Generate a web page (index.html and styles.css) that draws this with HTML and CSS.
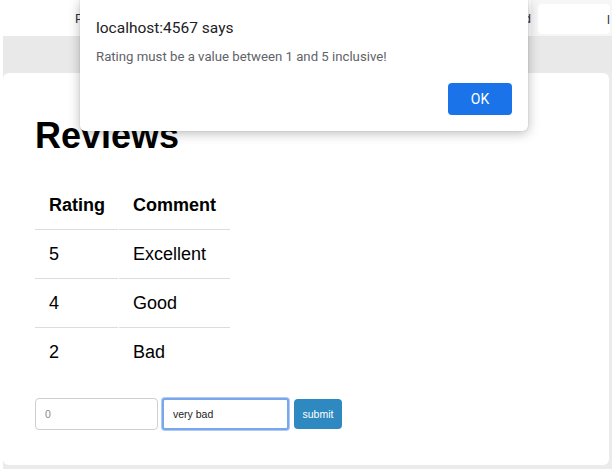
FILE: index.html
```html
<!DOCTYPE html>
<html>
<head>
<meta charset="utf-8">
<link rel="stylesheet" href="styles.css">
</head>
<body>
<div class="page">
  <nav class="topbar">
    <div class="tab tab-first"><span class="tab-label">Products</span></div>
    <div class="tab tab-mid"><span class="tab-label">Add</span></div>
    <div class="tab tab-last"><span class="tab-label">l</span></div>
  </nav>
  <div class="band"></div>
  <main class="card">
    <h1 class="title">Reviews</h1>
    <table class="reviews">
      <thead>
        <tr><th>Rating</th><th>Comment</th></tr>
      </thead>
      <tbody>
        <tr><td>5</td><td>Excellent</td></tr>
        <tr><td>4</td><td>Good</td></tr>
        <tr><td>2</td><td>Bad</td></tr>
      </tbody>
    </table>
    <form class="review-form">
      <input class="field field-rating" type="text" placeholder="0">
      <input class="field field-comment" type="text" value="very bad">
      <button class="submit" type="button">submit</button>
    </form>
  </main>
</div>
<div class="dialog">
  <div class="dialog-title">localhost:4567 says</div>
  <div class="dialog-msg">Rating must be a value between 1 and 5 inclusive!</div>
  <div class="dialog-actions"><button class="ok" type="button">OK</button></div>
</div>
</body>
</html>
```
FILE: styles.css
```css
html, body {
  margin: 0;
  padding: 0;
  background: #ffffff;
  font-family: "Liberation Sans", Arial, sans-serif;
  color: #000;
}
.page {
  margin-left: 3px;
  background: #ebebeb;
  height: 469px;
  display: flex;
  flex-direction: column;
}
.topbar {
  height: 36px;
  background: #f6f6f6;
  display: flex;
  align-items: stretch;
}
.tab {
  background: #fff;
  display: flex;
  align-items: center;
  font-size: 13px;
  color: #333;
}
.tab-first {
  width: 200px;
  padding-left: 72px;
  box-sizing: border-box;
}
.tab-mid {
  margin-left: 50px;
  width: 278px;
  justify-content: flex-end;
  box-sizing: border-box;
}
.tab-last {
  margin: 4px 0 2px 7px;
  width: 72px;
  border-radius: 4px;
  padding-left: 69px;
  box-sizing: border-box;
  white-space: nowrap;
}
.band {
  height: 37px;
  background: #e9e9e9;
}
.card {
  background: #fff;
  width: 606px;
  height: 392px;
  box-sizing: border-box;
  border-radius: 6px;
  padding: 1px 32px 0 32px;
}
.title {
  font-size: 36px;
  font-weight: bold;
  margin: 41px 0 24px 0;
  line-height: 42px;
}
.reviews {
  border-collapse: separate;
  border-spacing: 1px 0;
  margin-left: -1px;
  font-size: 18px;
}
.reviews th, .reviews td {
  text-align: left;
  padding: 0 14px;
  height: 48px;
  vertical-align: middle;
}
.reviews th:first-child, .reviews td:first-child {
  padding-right: 13px;
}
.reviews th {
  font-weight: bold;
}
.reviews thead th, .reviews tbody tr:not(:last-child) td {
  border-bottom: 1px solid #dcdcdc;
}
.review-form {
  display: flex;
  align-items: center;
  gap: 4px;
  margin-top: 22px;
}
.field {
  height: 32px;
  box-sizing: border-box;
  border: 1px solid #cfcfcf;
  border-radius: 4px;
  font-family: "Liberation Sans", Arial, sans-serif;
  font-size: 10.5px;
  padding: 0 9px;
  color: #222;
  background: #fff;
  outline: none;
}
.field::placeholder {
  color: #888;
}
.field-rating {
  width: 123px;
}
.field-comment {
  width: 127px;
  border: 2px solid #7aa7ec;
  border-radius: 3px;
  box-shadow: 0 0 0 1px #aecbf5;
  padding: 0 9px;
}
.submit {
  width: 48px;
  height: 30px;
  border: none;
  border-radius: 4px;
  background: #2d89bf;
  color: #fff;
  font-family: "Liberation Sans", Arial, sans-serif;
  font-size: 10.5px;
  padding: 0;
  margin-left: 1px;
}
.dialog {
  position: absolute;
  left: 80px;
  top: 0;
  width: 448px;
  height: 131px;
  box-sizing: border-box;
  background: #fff;
  border-radius: 0 0 5px 5px;
  box-shadow: 0 2px 12px rgba(0,0,0,0.28), 0 0 1px rgba(0,0,0,0.3);
  padding: 18px 16px 16px 16px;
  font-family: Roboto, "Noto Sans", sans-serif;
  display: flex;
  flex-direction: column;
}
.dialog-title {
  font-size: 15.5px;
  color: #202124;
  line-height: 20px;
}
.dialog-msg {
  font-size: 13.2px;
  color: #5f6368;
  margin-top: 10px;
  line-height: 18px;
}
.dialog-actions {
  margin-top: auto;
  display: flex;
  justify-content: flex-end;
}
.ok {
  width: 64px;
  height: 32px;
  border: none;
  border-radius: 4px;
  background: #1a73e8;
  color: #fff;
  font-family: Roboto, "Noto Sans", sans-serif;
  font-size: 14px;
  padding: 0;
}
```
